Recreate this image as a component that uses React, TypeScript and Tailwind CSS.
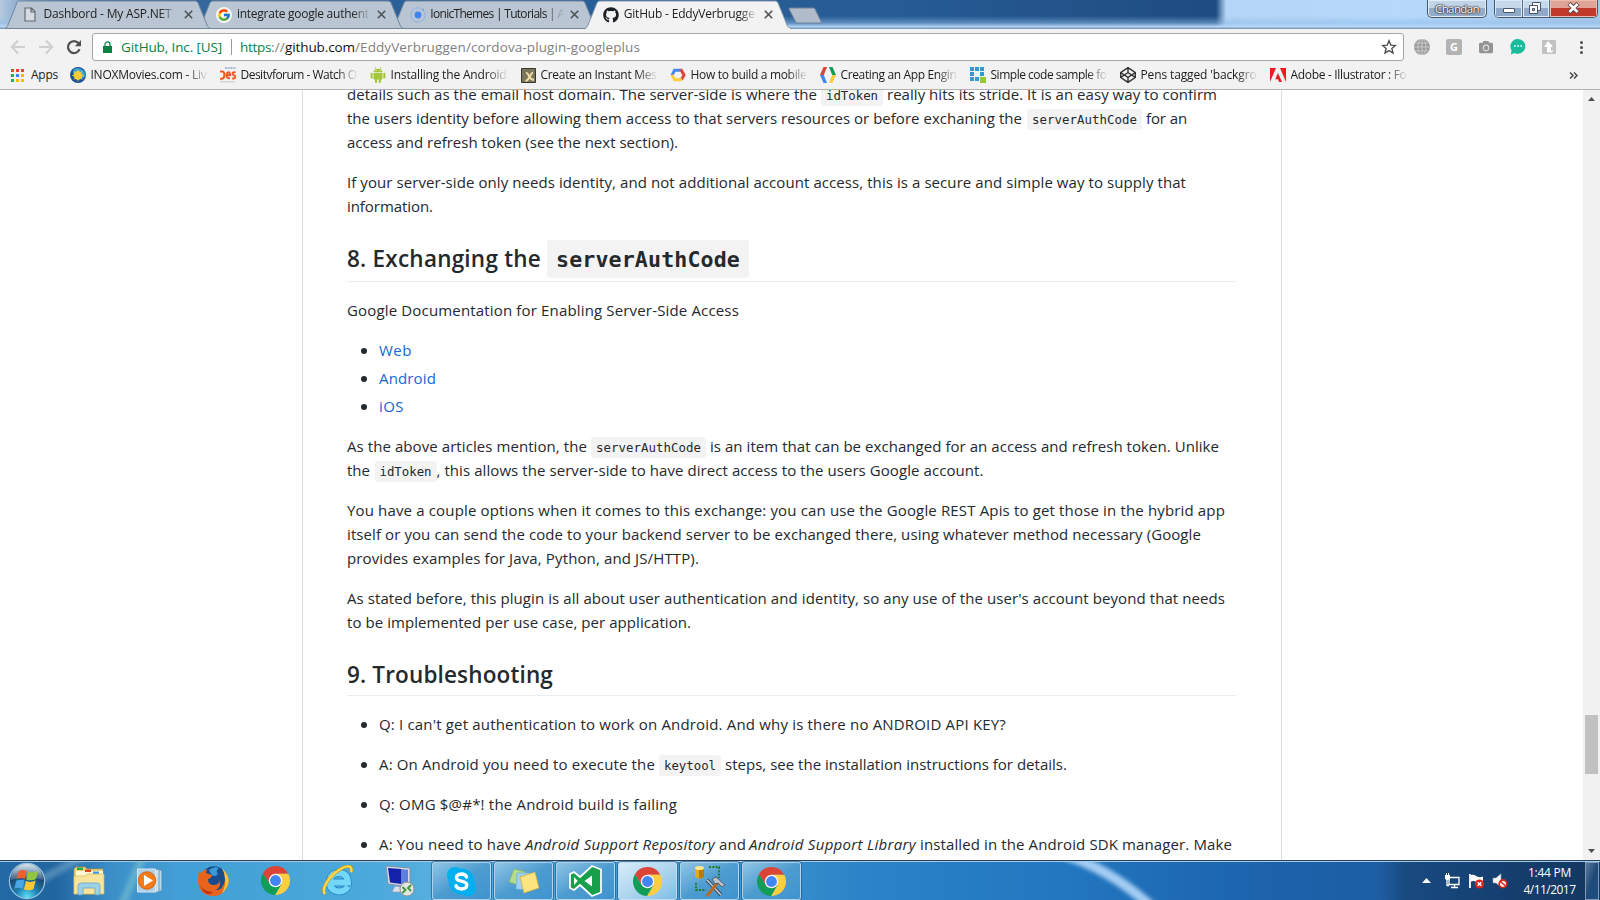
import React, { useLayoutEffect, useRef, useState } from "react";
import { FaGithub, FaCodepen, FaCamera } from "react-icons/fa";
import { FcGoogle } from "react-icons/fc";

/* Text whose tracking is adjusted so that it spans w pixels. */
function Fit({ w, children, className = "" }: { w: number; children: string; className?: string }) {
  const ref = useRef<HTMLSpanElement>(null);
  const [ls, setLs] = useState(0);
  useLayoutEffect(() => {
    const el = ref.current;
    if (!el) return;
    el.style.letterSpacing = "0px";
    const natural = el.getBoundingClientRect().width;
    const next = (w - natural) / children.length;
    el.style.letterSpacing = `${next}px`;
    setLs(next);
  }, [w, children]);
  return (
    <span ref={ref} className={`inline-block shrink-0 whitespace-pre ${className}`} style={{ letterSpacing: `${ls}px` }}>
      {children}
    </span>
  );
}

const Row = ({ children }: { children: React.ReactNode }) => <div className="flex h-6 items-start whitespace-nowrap">{children}</div>;

function Code({ w, children }: { w: number; children: string }) {
  return (
    <code className="mt-[3px] flex h-[21px] shrink-0 rounded-[3px] bg-[#f3f3f3] px-[5px] font-['DejaVu_Sans_Mono',monospace] text-[12.4px] leading-[21px]">
      <Fit w={w - 10}>{children}</Fit>
    </code>
  );
}

function Item({ children, className = "" }: { children: React.ReactNode; className?: string }) {
  return (
    <li className={`flex items-start ${className}`}>
      <span className="mt-[10px] mr-[12px] ml-[14px] h-[6px] w-[6px] shrink-0 rounded-full bg-[#24292e]" />
      {children}
    </li>
  );
}

function ChromeLogo({ className = "h-[31px] w-[31px]" }: { className?: string }) {
  return (
    <svg viewBox="0 0 32 32" className={className}>
      <path d="M16 9H29.3A15 15 0 0 0 3 8.5L9.9 19.5Z" fill="#db4437" />
      <path d="M29.3 9A15 15 0 0 1 15.5 31L22.1 19.5L16 9Z" fill="#ffcd40" />
      <path d="M3 8.5A15 15 0 0 0 15.5 31L22.1 19.5H9.9Z" fill="#0f9d58" />
      <circle cx="16" cy="16" r="7" fill="#f5f5f5" />
      <circle cx="16" cy="16" r="5.6" fill="#4285f4" />
    </svg>
  );
}

function Tab({ icon, title, w, active = false, className = "" }: { icon: React.ReactNode; title: string; w: number; active?: boolean; className?: string }) {
  return (
    <div className={`relative -ml-[12.6px] flex h-[29px] w-[206px] shrink-0 items-center pl-[18px] ${className}`}>
      <svg className="absolute inset-0 h-[29px] w-[206px]" viewBox="0 0 206 29">
        <path d="M0 28.5C1.5 28 2 27 3 25L11.5 4C12.5 1.8 13 1 15 1H190C192 1 192.6 1.8 193.5 4L202 25C203 27.4 204 28 206 28.5Z" fill={active ? "#f2f2f2" : "#b9c5d2"} stroke={active ? "none" : "#71879e"} />
        {active && <path d="M0 28.5C1.5 28 2 27 3 25L11.5 4C12.5 1.8 13 1 15 1H190C192 1 192.6 1.8 193.5 4L202 25C203 27.4 204 28 206 28.5" fill="none" stroke="#7f95ac" />}
        {active && <path d="M1 28.5H205" stroke="#f2f2f2" />}
      </svg>
      <span className="relative flex w-[20.5px] items-center">{icon}</span>
      <span className="relative w-[134px] pb-px text-[12px] leading-4 text-[#222] [mask-image:linear-gradient(to_right,black_86%,transparent)]">
        <Fit w={w}>{title}</Fit>
      </span>
      <svg className="relative ml-[6px] h-[9px] w-[9px]" viewBox="0 0 9 9">
        <path d="M.8 .8L8.2 8.2M8.2 .8L.8 8.2" stroke="#4d5358" strokeWidth="1.6" />
      </svg>
    </div>
  );
}

function Bookmark({ icon, children, w = 116 }: { icon: React.ReactNode; children: string; w?: number }) {
  return (
    <div className="flex w-[150px] shrink-0 items-center">
      <span className="flex h-4 w-[21px] shrink-0 items-center">{icon}</span>
      <span className="w-[117px] [mask-image:linear-gradient(to_right,black_82%,transparent)]">
        <Fit w={w}>{children}</Fit>
      </span>
    </div>
  );
}

function TaskButton({ children, lit = false }: { children: React.ReactNode; lit?: boolean }) {
  return (
    <div className={`mt-px mr-[3px] flex h-[38px] w-[59px] shrink-0 items-center justify-center rounded-[3px] border border-[#c3e0f3]/80 shadow-[0_0_0_1px_#1c507c99] ${lit ? "bg-linear-to-br from-[#d8edf9] via-[#b0d6ee] to-[#7fbde6]" : "bg-linear-to-br from-[#8fc5e5] via-[#4d9cd0] to-[#3f94cf]"}`}>
      {children}
    </div>
  );
}

const appColors = ["#ea4335", "#ea4335", "#ea4335", "#34a853", "#4285f4", "#fbbc05", "#34a853", "#fbbc05", "#fbbc05"];

function TitleBar() {
  return (
    <div className="flex h-[29px] shrink-0 overflow-hidden bg-[linear-gradient(to_bottom,transparent_16px,#8fbbe888_23px,#b8d9f9_27px,#7f9dbb_28px),linear-gradient(to_right,#b5cbe0_0px,#6f98c3_30px,#3d6fa5_70px,#2c6299_300px,#265b94_900px,#1f4c80_1216px,#b3d5f6_1226px,#b6d9fb_1400px,#a9c9e9_1600px)]">
      <div className="flex w-[1427px] pl-[17.6px]">
        <Tab className="z-30" w={128} title="Dashbord - My ASP.NET" icon={
          <svg className="ml-px h-[15px] w-[12px]" viewBox="0 0 12 15"><path d="M1 1H7.5L11 4.5V14H1ZM7 1V5H11" fill="#d4dbe2" stroke="#646a70" strokeWidth="1.2" /></svg>} />
        <Tab className="z-20" w={132} title="integrate google authent" icon={
          <span className="flex h-4 w-4 items-center justify-center rounded-full bg-[#f4f6f8]"><FcGoogle size={14} /></span>} />
        <Tab className="z-10" w={134} title="IonicThemes | Tutorials | A" icon={
          <svg className="h-4 w-4" viewBox="0 0 16 16"><circle cx="8" cy="8" r="7.2" fill="none" stroke="#8fb0e6" /><circle cx="8" cy="8" r="3.4" fill="#4083ee" /><circle cx="13.2" cy="2.8" r="1" fill="#6d9cec" /></svg>} />
        <Tab className="z-40" w={131} active title="GitHub - EddyVerbrugge" icon={<FaGithub size={16} color="#1b1f23" />} />
        <svg className="mt-[7px] -ml-[3px] h-[17px] w-[35px]" viewBox="0 0 35 17">
          <path d="M1.5 1H25C26.5 1 27 1.5 27.5 3L33 14.5C33.5 15.6 33 16 32 16H10C8.6 16 8 15.5 7.5 14.5L1.5 3C1 1.8 1 1 1.5 1Z" fill="#b0bcc9" stroke="#6d8299" />
        </svg>
      </div>
      <div className="flex h-[18px] w-[60px] items-center justify-center rounded-b-[5px] border border-t-0 border-[#48586a] bg-linear-to-b from-[#c2d4e8] from-50% to-[#93adc9] to-50% text-[11.5px] text-white shadow-[inset_0_0_0_1px_#e0ecf8] [text-shadow:0_0_2px_#222,0_0_2px_#222,0_0_1px_#222]">
        <Fit w={44}>Chandan</Fit>
      </div>
      <div className="ml-[7px] flex h-[18px] w-[104px] overflow-hidden rounded-b-[5px] border border-t-0 border-[#48586a]">
        <div className="flex w-[28px] items-center justify-center border-r border-[#5b6f85] bg-linear-to-b from-[#c6d8eb] from-50% to-[#8faac8] to-50% shadow-[inset_0_0_0_1px_#dce9f6]">
          <span className="mt-1 h-[5px] w-[12px] rounded-[1px] border border-[#4b5565] bg-white" />
        </div>
        <div className="flex w-[27px] items-center justify-center border-r border-[#5b6f85] bg-linear-to-b from-[#c6d8eb] from-50% to-[#8faac8] to-50% shadow-[inset_0_0_0_1px_#dce9f6]">
          <svg className="-ml-[2px] -mt-[2px] h-3 w-3" viewBox="0 0 12 12"><path d="M3.5 .5H11.5V8.5H3.5Z" fill="#fff" stroke="#4b5565" /><path d="M.5 3.5H8.5V11.5H.5Z" fill="#fff" stroke="#4b5565" /><path d="M3.5 6.5H5.5V8.5H3.5Z" fill="#a3b5cb" stroke="#4b5565" /></svg>
        </div>
        <div className="flex grow items-center justify-center bg-linear-to-b from-[#e0a496] from-45% to-[#c0392b] to-50% shadow-[inset_0_0_0_1px_#ecbcae]">
          <svg className="-mt-[2px] h-3 w-[13px]" viewBox="0 0 13 12"><path d="M2 1.5L11 10.5M11 1.5L2 10.5" stroke="#5b4043" strokeWidth="4.4" /><path d="M2.4 2L10.6 10M10.6 2L2.4 10" stroke="#fff" strokeWidth="2.6" /></svg>
        </div>
      </div>
    </div>
  );
}

function Toolbar() {
  return (
    <div className="flex h-[32px] items-end pl-[10px]">
      <div className="flex h-[28px] w-[82px] shrink-0 items-center">
        <svg className="h-[16px] w-[16px]" viewBox="0 0 16 16"><path d="M15 8H2M8 1.5L1.8 8L8 14.5" fill="none" stroke="#cfcfcf" strokeWidth="2" /></svg>
        <svg className="ml-[12px] h-[16px] w-[16px]" viewBox="0 0 16 16"><path d="M1 8H14M8 1.5L14.2 8L8 14.5" fill="none" stroke="#cfcfcf" strokeWidth="2" /></svg>
        <svg className="ml-[12px] h-[16px] w-[16px]" viewBox="0 0 16 16"><path d="M13.6 10.2A6 6 0 1 1 12.6 4.2" fill="none" stroke="#505050" strokeWidth="2.2" /><path d="M15 1V7.2H8.8Z" fill="#505050" /></svg>
      </div>
      <div className="flex h-[28px] w-[1312px] shrink-0 items-center rounded-[3px] border border-[#a5a5a5] bg-white pl-[10px] text-[13.5px]">
        <svg className="h-3 w-[9px]" viewBox="0 0 9 12"><path d="M0 5H9V12H0Z" fill="#0b8043" /><path d="M2 5.5V3.4A2.5 2.5 0 0 1 7 3.4V5.5" fill="none" stroke="#0b8043" strokeWidth="1.3" /></svg>
        <Fit w={101} className="ml-[9px] text-[#0b8043]">GitHub, Inc. [US]</Fit>
        <span className="mr-[8px] ml-[9px] h-4 w-px bg-[#9b9b9b]" />
        <Fit w={31} className="text-[#0b8043]">https</Fit>
        <Fit w={14} className="text-[#808080]">://</Fit>
        <Fit w={70} className="text-[#111]">github.com</Fit>
        <Fit w={285} className="text-[#808080]">/EddyVerbruggen/cordova-plugin-googleplus</Fit>
        <svg className="mr-[6px] ml-auto h-4 w-4" viewBox="0 0 16 16"><path d="M8 1.8L9.8 6.1L14.4 6.5L10.9 9.5L12 14L8 11.6L4 14L5.1 9.5L1.6 6.5L6.2 6.1Z" fill="none" stroke="#505050" strokeWidth="1.4" /></svg>
      </div>
      <div className="flex h-[28px] grow items-center pl-[10px]">
        <svg className="h-4 w-4" viewBox="0 0 16 16"><circle cx="8" cy="8" r="8" fill="#9b9b9b" /><path d="M0 8H16M8 0V16M1.5 4H14.5M1.5 12H14.5" stroke="#d3d3d3" strokeWidth=".8" /><ellipse cx="8" cy="8" rx="4" ry="8" fill="none" stroke="#d3d3d3" strokeWidth=".8" /></svg>
        <span className="ml-4 flex h-4 w-4 items-center justify-center rounded-[2px] bg-[#b3b3b3] text-[11px] font-bold text-white">G</span>
        <FaCamera className="ml-[17px]" size={14} color="#949494" />
        <svg className="ml-[17px] h-4 w-4" viewBox="0 0 16 16"><path d="M8 0A7.4 7.4 0 1 1 4.6 14L.8 15.4L1.6 11.4A7.4 7.4 0 0 1 8 0Z" fill="#1abc9c" /><path d="M4 7H5.6M7.2 7H8.8M10.4 7H12" stroke="#fff" strokeWidth="1.5" /></svg>
        <span className="ml-4 flex h-[14px] w-[14px] items-center justify-center rounded-[1px] bg-[#c2c2c2]">
          <svg className="h-3 w-3" viewBox="0 0 12 12"><path d="M5 0L10 5.5L8 6V10L11 8.5L9 11.5H4V6H1Z" fill="#fff" /></svg>
        </span>
        <span className="ml-[24px] flex flex-col gap-[2px]">
          <i className="h-[3px] w-[3px] rounded-full bg-[#505050]" /><i className="h-[3px] w-[3px] rounded-full bg-[#505050]" /><i className="h-[3px] w-[3px] rounded-full bg-[#505050]" />
        </span>
      </div>
    </div>
  );
}

function Bookmarks() {
  return (
    <div className="flex h-[28px] items-center pl-[11px] text-[12px] leading-4 text-[#1c1c1c]">
      <span className="grid w-[13px] shrink-0 grid-cols-3 gap-[2px]">
        {appColors.map((c, i) => (
          <i key={i} className="h-[3px] w-[3px]" style={{ background: c }} />
        ))}
      </span>
      <Fit w={27} className="mr-[11.5px] ml-[7px]">Apps</Fit>
      <Bookmark icon={<svg className="h-4 w-4" viewBox="0 0 16 16"><circle cx="8" cy="8" r="8" fill="#1c4f96" /><path d="M4 2A8 8 0 0 1 15.5 9A6 6 0 0 1 4 2Z" fill="#35a7dc" /><circle cx="8" cy="8.5" r="4.4" fill="#f5cf2f" /><path d="M8 2.5V14.5M2 8.5H14M3.8 4.3L12.2 12.7M12.2 4.3L3.8 12.7" stroke="#f5cf2f" strokeWidth=".8" /></svg>}>INOXMovies.com - Liv</Bookmark>
      <Bookmark icon={<svg className="h-4 w-4" viewBox="0 0 16 16"><path d="M5 1H16" stroke="#8fb0c8" strokeWidth="1.6" strokeDasharray="2 .6" /><path d="M0 4.4H2.4Q4.4 5 4.4 8Q4.4 11 2.4 11.7H0M7 8.3H10.2Q10 5.2 8.4 5.2Q6.7 5.4 6.7 8.4Q6.8 11.6 10 11.2M15.6 5.4Q12.6 4.8 12.6 6.8Q12.8 8 14.2 8.4Q15.6 9 15.2 10.6Q14.4 11.8 12.2 11.2" fill="none" stroke="#f15a24" strokeWidth="2" /><path d="M0 14.8H15" stroke="#b9b9b9" strokeDasharray="2 .7" /></svg>}>Desitvforum - Watch O</Bookmark>
      <Bookmark icon={<svg className="h-4 w-4" viewBox="0 0 16 16" fill="#a4c639"><path d="M3.5 5A4.6 4.2 0 0 1 12.5 5ZM3.5 5.8H12.5V12.5H3.5Z" /><path d="M5 0L6 2M11 0L10 2" stroke="#a4c639" strokeWidth=".8" /><rect x=".6" y="5.8" width="2.1" height="5.6" rx="1" /><rect x="13.3" y="5.8" width="2.1" height="5.6" rx="1" /><rect x="5" y="11" width="2.1" height="5" rx="1" /><rect x="8.9" y="11" width="2.1" height="5" rx="1" /><circle cx="6" cy="3.4" r=".5" fill="#fff" /><circle cx="10" cy="3.4" r=".5" fill="#fff" /></svg>}>Installing the Android</Bookmark>
      <Bookmark icon={<svg className="ml-px h-[15px] w-[15px]" viewBox="0 0 15 15"><path d="M.5 .5H14.5V14.5H.5Z" fill="#7a755b" stroke="#3b3829" /><path d="M5 5C8 4 8 13 13 11.5M12 4.5C9 5 9 12 4.5 13" fill="none" stroke="#ecdca8" strokeWidth="2" /></svg>}>Create an Instant Mes</Bookmark>
      <Bookmark icon={<svg className="h-4 w-4" viewBox="0 0 16 16" fill="none" strokeWidth="3"><path d="M2 8.4L4.6 3.2H10.8" stroke="#4285f4" /><path d="M10.4 3.2H11.3L14 8L11.5 12.5" stroke="#db4437" /><path d="M12 12.8H4.7L2 8" stroke="#ffcd40" /></svg>}>How to build a mobile</Bookmark>
      <Bookmark icon={<svg className="h-4 w-4" viewBox="0 0 16 16"><path d="M3.5 0H7L3.8 8H0Z" fill="#db4437" /><path d="M0 8H3.8L7 16H3.5Z" fill="#4285f4" /><path d="M9 0H12.5L16 8H12.2Z" fill="#0f9d58" /><path d="M12.2 8H16L12.5 16H9Z" fill="#ffcd40" /></svg>}>Creating an App Engin</Bookmark>
      <Bookmark icon={<svg className="h-4 w-4" viewBox="0 0 16 16"><path d="M0 0H4V4H0ZM5 0H9V4H5ZM10 0H14V4H10ZM0 5H4V9H0ZM10 5H14V9H10ZM0 10H4V14H0ZM5 10H9V14H5Z" fill="#3a96d2" /><path d="M10 10H16V16H10Z" fill="#9bc53d" /></svg>}>Simple code sample fo</Bookmark>
      <Bookmark icon={<FaCodepen size={16} color="#2f2f2f" />}>Pens tagged 'backgro</Bookmark>
      <Bookmark icon={<svg className="h-[14px] w-4" viewBox="0 0 16 14"><path d="M0 0H6L0 14ZM10 0H16V14ZM8 5L12 14H9L8 11.3H5.2Z" fill="#ed1c24" /></svg>}>Adobe - Illustrator : Fo</Bookmark>
      <svg className="mr-[22.5px] ml-auto h-[7px] w-[9px]" viewBox="0 0 9 7"><path d="M1 .5L4 3.5L1 6.5M5 .5L8 3.5L5 6.5" fill="none" stroke="#4a4a4a" strokeWidth="1.5" /></svg>
    </div>
  );
}

function Article() {
  return (
    <article className="ml-[302px] w-[980px] shrink-0 self-stretch border-x border-[#ddd] pl-[44px] text-[15px] leading-6 text-[#24292e]">
      <div className="-mt-2 mb-4">
        <Row><Fit w={470}>details such as the email host domain. The server-side is where the</Fit><span className="w-[4px]" /><Code w={62}>idToken</Code><span className="w-[4px]" /><Fit w={330}>really hits its stride. It is an easy way to confirm</Fit></Row>
        <Row><Fit w={675}>the users identity before allowing them access to that servers resources or before exchaning the</Fit><span className="w-[5px]" /><Code w={115}>serverAuthCode</Code><span className="w-[4px]" /><Fit w={41}>for an</Fit></Row>
        <Row><Fit w={331}>access and refresh token (see the next section).</Fit></Row>
      </div>
      <div>
        <Row><Fit w={839}>If your server-side only needs identity, and not additional account access, this is a secure and simple way to supply that</Fit></Row>
        <Row><Fit w={86}>information.</Fit></Row>
      </div>
      <h2 className="mt-6 mb-4 flex h-10 w-[889px] items-start border-b border-[#eaecef] text-[22.5px] leading-[30px] font-semibold">
        <Fit w={194} className="mt-[2px]">8. Exchanging the</Fit>
        <code className="-mt-[2px] ml-[6px] flex h-[38px] rounded-[3px] bg-[#f3f3f3] px-[9px] font-['DejaVu_Sans_Mono',monospace] text-[21.6px] leading-[39px] font-bold"><Fit w={184}>serverAuthCode</Fit></code>
      </h2>
      <Row><Fit w={392}>Google Documentation for Enabling Server-Side Access</Fit></Row>
      <ul className="my-4 flex flex-col gap-1 text-[#2065d1]">
        <Item><Fit w={33}>Web</Fit></Item>
        <Item><Fit w={57}>Android</Fit></Item>
        <Item><Fit w={25}>iOS</Fit></Item>
      </ul>
      <div className="mb-4">
        <Row><Fit w={240}>As the above articles mention, the</Fit><span className="w-[4px]" /><Code w={115}>serverAuthCode</Code><span className="w-[4px]" /><Fit w={509}>is an item that can be exchanged for an access and refresh token. Unlike</Fit></Row>
        <Row><Fit w={23}>the</Fit><span className="w-[4.5px]" /><Code w={62}>idToken</Code><Fit w={547}>, this allows the server-side to have direct access to the users Google account.</Fit></Row>
      </div>
      <div className="mb-4">
        <Row><Fit w={878}>You have a couple options when it comes to this exchange: you can use the Google REST Apis to get those in the hybrid app</Fit></Row>
        <Row><Fit w={854}>itself or you can send the code to your backend server to be exchanged there, using whatever method necessary (Google</Fit></Row>
        <Row><Fit w={352}>provides examples for Java, Python, and JS/HTTP).</Fit></Row>
      </div>
      <div>
        <Row><Fit w={878}>As stated before, this plugin is all about user authentication and identity, so any use of the user's account beyond that needs</Fit></Row>
        <Row><Fit w={344}>to be implemented per use case, per application.</Fit></Row>
      </div>
      <h2 className="mt-6 mb-4 flex h-[38px] w-[889px] items-start border-b border-[#eaecef] text-[22.5px] leading-[30px] font-semibold">
        <Fit w={206} className="mt-[2px]">9. Troubleshooting</Fit>
      </h2>
      <ul className="flex flex-col gap-4">
        <Item><Fit w={627}>Q: I can't get authentication to work on Android. And why is there no ANDROID API KEY?</Fit></Item>
        <Item><Row><Fit w={276}>A: On Android you need to execute the</Fit><span className="w-[4px]" /><Code w={62}>keytool</Code><span className="w-[4px]" /><Fit w={342}>steps, see the installation instructions for details.</Fit></Row></Item>
        <Item><Fit w={298}>Q: OMG $@#*! the Android build is failing</Fit></Item>
        <Item><Row><Fit w={142}>A: You need to have</Fit><span className="w-[4px]" /><Fit w={190} className="italic">Android Support Repository</Fit><span className="w-[4px]" /><Fit w={27}>and</Fit><span className="w-[3px]" /><Fit w={167} className="italic">Android Support Library</Fit><span className="w-[4px]" /><Fit w={312}>installed in the Android SDK manager. Make</Fit></Row></Item>
      </ul>
    </article>
  );
}

function Taskbar() {
  return (
    <div className="relative flex h-10 shrink-0 overflow-hidden border-t border-[#26415f] bg-[linear-gradient(to_right,#2369a5_0px,#21659f_55px,#3b8fc8_110px,#429fd5_180px,#4caadb_380px,#55aede_430px,#3a92cf_760px,#2c83c7_860px,#2277c0_1060px,#1d66b0_1220px,#1c5da3_1380px,#194a80_1405px,#153f70_1500px,#14365f_1600px)] shadow-[inset_0_1px_0_#a9cae5]">
      <svg className="absolute inset-0 h-10 w-[1600px]" viewBox="0 0 1600 40">
        <defs><filter id="soft" x="-20%" y="-50%" width="140%" height="200%"><feGaussianBlur stdDeviation="2" /></filter></defs>
        <path d="M1065 -6C1100 5 1128 24 1154 48" stroke="#a4cdf4" strokeWidth="10" fill="none" filter="url(#soft)" />
        <path d="M120 48L143 -5" stroke="#8fd0cf" strokeOpacity=".45" strokeWidth="8" filter="url(#soft)" />
        <path d="M20 30L90 -8" stroke="#a9cde6" strokeOpacity=".35" strokeWidth="8" filter="url(#soft)" />
      </svg>
      <div className="relative flex w-[432px] shrink-0 items-center pl-[8px]">
        <svg className="h-[38px] w-[38px]" viewBox="0 0 38 38">
          <defs>
            <radialGradient id="orb" cx=".5" cy=".95" r=".9"><stop offset="0" stopColor="#5fe0f6" /><stop offset=".35" stopColor="#1d80b4" /><stop offset=".75" stopColor="#1a3f66" /><stop offset="1" stopColor="#6f93ae" /></radialGradient>
            <linearGradient id="orbTop" x2="0" y2="1"><stop offset="0" stopColor="#e2edf5" stopOpacity=".9" /><stop offset="1" stopColor="#8aa8be" stopOpacity=".35" /></linearGradient>
          </defs>
          <circle cx="19" cy="19" r="17.6" fill="url(#orb)" stroke="#9cc4dc" strokeWidth="1.2" />
          <path d="M3 18A16 16 0 0 1 35 18Q19 12 3 18Z" fill="url(#orbTop)" />
          <path d="M10.5 9.5Q14.5 6.8 18.6 9L16.8 17Q12.5 15 8.6 17.4Z" fill="#ee5f2b" />
          <path d="M20 9.5Q24.5 11.6 30 9L28 17Q23.5 19.4 18.2 17.5Z" fill="#93c83e" />
          <path d="M8.2 18.8Q12.5 16.7 16.5 18.5L14.7 26.8Q10.5 24.8 6.4 26.8Z" fill="#4aa6e4" />
          <path d="M17.8 19Q23 21 27.6 18.5L25.6 27Q21 29.4 16 27.3Z" fill="#fcc832" />
        </svg>
        <svg className="ml-[27px] h-[30px] w-[32px]" viewBox="0 0 32 30">
          <path d="M1 3L3 1H12L14 3H30V28H1Z" fill="#eed27a" stroke="#b9973f" strokeWidth=".7" /><path d="M4 1.5H10V4H4Z" fill="#28a745" /><path d="M3 5H30V14H3Z" fill="#fff7d4" /><path d="M12 3.5H18V6H12Z" fill="#d9482b" /><path d="M20 5.5H26V8H20Z" fill="#3c9be0" />
          <path d="M1 10H12L14 8H31V28H1Z" fill="#f8e49b" stroke="#d8bb62" strokeWidth=".7" />
          <path d="M5 29V20Q5 17 8 17H24Q27 17 27 20V29H22V22H10V29Z" fill="#93cff0" fillOpacity=".9" stroke="#5a9fc8" strokeWidth=".7" />
        </svg>
        <svg className="ml-[32px] h-[26px] w-[28px]" viewBox="0 0 28 26">
          <path d="M18 2H25V23H18Z" fill="#b8d8ec" stroke="#4f8fb8" /><path d="M15 1.5H22V24H15Z" fill="#c9e0ef" stroke="#6b9fc2" /><path d="M.5 1H18.5V24H.5Z" fill="#aecfe4" stroke="#d7e9f4" /><circle cx="10" cy="12.5" r="8.7" fill="#f27b1c" stroke="#d9640c" /><path d="M7 7L16 12.5L7 18Z" fill="#fff" />
        </svg>
        <svg className="ml-[32px] h-[32px] w-[32px]" viewBox="0 0 32 32">
          <circle cx="17" cy="14.5" r="13.3" fill="#174d8c" /><path d="M12 5Q17 1 22 3Q18 6 21 9Q17 13 14 9Z" fill="#399bd5" />
          <path d="M2 6L4 8Q6 5 10 4L9 8L15 10Q15 13 11 14Q11 20 17 20Q21 20 23 16Q24 23 18 25Q26 26 28 15Q29 9 25 4Q35 13 30 22Q25 32 15 31Q3 30 1 18Q1 10 2 6Z" fill="#e8641b" />
          <path d="M25 3Q35 13 30 22Q28 26 25 28Q29 20 28 14Q28 8 25 3Z" fill="#fbc53a" /><path d="M3 20Q7 27 16 27Q11 32 6 26Z" fill="#c13418" />
        </svg>
        <ChromeLogo className="ml-[31px] h-[31px] w-[31px]" />
        <svg className="ml-[31px] h-[32px] w-[32px]" viewBox="0 0 32 32">
          <path d="M26 21.5Q23 26.5 17 26.5Q7.500 25.500 7.500 16.500Q8.500 8 17 8Q25.500 8 26 17.500H10" fill="none" stroke="#2687c5" strokeWidth="7.4" /><path d="M26 21.5Q23 26.5 17 26.5Q7.500 25.500 7.500 16.500Q8.500 8 17 8Q25.500 8 26 17.500H10" fill="none" stroke="#73d8f8" strokeWidth="5.8" />
          <path d="M3 29C-1 24 7 11 17 5C26 -1 31 1 29 7" fill="none" stroke="#c08d16" strokeWidth="3.4" /><path d="M3 29C-1 24 7 11 17 5C26 -1 31 1 29 7" fill="none" stroke="#fbd94b" strokeWidth="2.4" />
        </svg>
        <svg className="ml-[31px] h-[32px] w-[31px]" viewBox="0 0 31 32">
          <path d="M1 1L25 3V22L3 19Z" fill="#d6dde8" stroke="#8290a6" /><path d="M3 3L16 4V19L5 17.5Z" fill="#1322a8" /><path d="M16 4L23 4.8V19.7L16 19Z" fill="#5d7fe0" /><path d="M10 21L16 22V27H7Z" fill="#dbe1ea" stroke="#8c97a9" strokeWidth=".6" />
          <circle cx="22" cy="24" r="7" fill="#e2e5e2" stroke="#8a918b" /><path d="M17.5 22L20.5 25L17.5 28M26 20L23 23L26 26" fill="none" stroke="#3c9439" strokeWidth="1.8" />
        </svg>
      </div>
      <div className="relative flex">
        <TaskButton><svg className="h-[31px] w-[31px]" viewBox="0 0 31 31"><circle cx="15.5" cy="15.5" r="13" fill="#00aff0" /><circle cx="9" cy="9" r="8" fill="#00aff0" /><circle cx="22" cy="22" r="8" fill="#00aff0" /><path d="M20.5 11Q19.5 8 15.5 8Q10.5 8.3 10.5 11.5Q10.5 14.3 15.5 15.2Q21 16.3 20.8 19.2Q20.5 23 15.5 23Q11 23 10 19.8" fill="none" stroke="#fff" strokeWidth="3.4" strokeLinecap="round" /></svg></TaskButton>
        <TaskButton><svg className="h-[26px] w-[32px]" viewBox="0 0 32 26"><path d="M6 1L18 4L13 18L1 14Z" fill="#b4dc8c" stroke="#82b45c" strokeWidth=".7" /><path d="M9 5L22 5L21 22L8 21Z" fill="#9dd0f4" stroke="#75add6" strokeWidth=".7" /><path d="M12 9L27 4L31 20L16 25Z" fill="#fce580" stroke="#d1ac42" strokeWidth=".8" /></svg></TaskButton>
        <TaskButton><svg className="h-[32px] w-[33px]" viewBox="0 0 33 32"><path d="M23 1L32 4.5V27.5L23 31L11 20L5 25L1 23V9L5 7L11 12Z" fill="#16a04c" stroke="#fff" strokeWidth="1.7" /><path d="M23 10.5V21.5L15.5 16ZM5 12V20L8.8 16Z" fill="#fff" /></svg></TaskButton>
        <TaskButton lit><ChromeLogo /></TaskButton>
        <TaskButton><svg className="h-[32px] w-[32px]" viewBox="0 0 32 32"><path d="M1 3V12Q5.5 15 10 12V3Z" fill="#e2a91c" /><path d="M5 4V13.4Q8 13.4 10 12V3Z" fill="#b67b0c" /><ellipse cx="5.5" cy="3" rx="4.5" ry="2" fill="#fde588" /><path d="M15 2H25V13M2 18V25H12" fill="none" stroke="#1f7c22" strokeWidth="1.8" strokeDasharray="2 1.3" /><path d="M13 15L27 30" stroke="#36424c" strokeWidth="3.4" /><path d="M13 15L27 30" stroke="#c1cbd1" strokeWidth="1.8" /><path d="M13 31L24 17" stroke="#b96b25" strokeWidth="3" /><path d="M18 14L22 12L31 20L28 22L24 18L21 19Z" fill="#b9c3ca" stroke="#49545d" strokeWidth=".9" /></svg></TaskButton>
        <TaskButton><ChromeLogo /></TaskButton>
      </div>
      <div className="relative ml-auto flex items-center">
        <svg className="h-[5px] w-[9px]" viewBox="0 0 9 5"><path d="M0 5L4.5 0L9 5Z" fill="#f4f7fa" /></svg>
        <svg className="ml-[13px] h-[16px] w-[16px]" viewBox="0 0 16 16"><path d="M5 4.5H15V11.5H5ZM7 14.5H14M10.5 11.5V14.5M3 6V12.5H5" fill="none" stroke="#fff" strokeWidth="1.3" /><path d="M1 2H6V6Q3.5 8 1 6Z" fill="#fff" /><path d="M2.5 0V3M4.5 0V3" stroke="#fff" /></svg>
        <svg className="ml-[8px] h-[16px] w-[17px]" viewBox="0 0 17 16"><path d="M2 1V15" stroke="#fff" strokeWidth="1.8" /><path d="M3 2Q6 1 8 3Q11 5 15 3.500V9.500Q11 11 8 9Q6 7.500 3 8.500Z" fill="#fff" /><circle cx="11.5" cy="11" r="4.6" fill="#d9261c" /><path d="M9.700 9.200L13.300 12.800M13.300 9.200L9.700 12.800" stroke="#fff" strokeWidth="1.4" /></svg>
        <svg className="ml-[7px] h-[16px] w-[16px]" viewBox="0 0 16 16"><path d="M1 5H4L9 .8V14L4 10H1Z" fill="#fff" stroke="#8d9bab" strokeWidth=".6" /><circle cx="11" cy="10.800" r="3.800" fill="#fff" stroke="#d9261c" strokeWidth="1.8" /><path d="M8.500 8.500L13.500 13" stroke="#d9261c" strokeWidth="1.600" /></svg>
        <div className="ml-[14px] flex w-[55px] flex-col items-center text-[12px] leading-[17px] text-white">
          <Fit w={43}>1:44 PM</Fit>
          <Fit w={52}>4/11/2017</Fit>
        </div>
        <div className="mr-px ml-[8px] h-[38px] w-[14px] border border-[#7f9ab6] bg-linear-to-br from-[#5b7c9f] via-[#1f4a78] to-[#1b4f85]" />
      </div>
    </div>
  );
}

export default function App() {
  return (
    <div className="flex h-[900px] w-[1600px] flex-col overflow-hidden bg-white font-['Open_Sans','Noto_Sans',sans-serif]">
      <TitleBar />
      <div className="flex h-[61px] shrink-0 flex-col border-b border-[#b2b2b2] bg-[#f2f2f2]">
        <Toolbar />
        <Bookmarks />
      </div>
      <div className="flex h-[770px] shrink-0 items-start overflow-hidden">
        <Article />
        <div className="ml-auto flex h-[770px] w-[17px] flex-col items-center bg-[#f1f1f1]">
          <svg className="mt-[7px] h-[4px] w-[7px]" viewBox="0 0 7 4"><path d="M0 4L3.5 0L7 4Z" fill="#505050" /></svg>
          <span className="mt-[614px] h-[59px] w-[13px] bg-[#c1c1c1]" />
          <svg className="mt-auto mb-[7px] h-[4px] w-[7px]" viewBox="0 0 7 4"><path d="M0 0L3.5 4L7 0Z" fill="#505050" /></svg>
        </div>
      </div>
      <Taskbar />
    </div>
  );
}
